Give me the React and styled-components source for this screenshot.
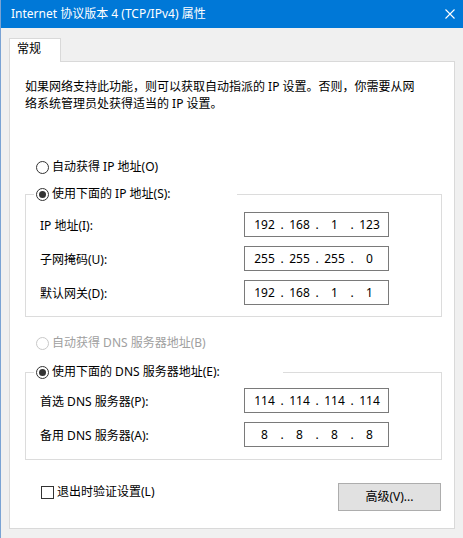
import React from "react";
import styled, { createGlobalStyle } from "styled-components";

const Global = createGlobalStyle`
  html, body { margin: 0; padding: 0; background: #f0f0f0; }
  * { box-sizing: border-box; }
`;

const Window = styled.div`
  width: 463px;
  height: 538px;
  overflow: hidden;
  background: #f0f0f0;
  border-left: 1px solid #7aa3d4;
  font-family: "Noto Sans", "Noto Sans CJK SC", sans-serif;
  font-size: 12px;
  color: #000;
`;

const TitleBar = styled.div`
  height: 28px;
  background: #0078d7;
  color: #fff;
  display: flex;
  align-items: center;
  justify-content: space-between;
  padding: 0 8px 1px 10px;
  line-height: 16px;
`;

const Content = styled.div`
  padding: 10px 8px 0 8px;
`;

const TabStrip = styled.div`
  display: flex;
`;

const Tab = styled.div`
  position: relative;
  z-index: 1;
  width: 52px;
  height: 24px;
  background: #fff;
  border: 1px solid #d9d9d9;
  border-bottom: none;
  padding: 1px 0 0 7px;
  line-height: 18px;
  margin-bottom: -1px;
`;

const Panel = styled.div`
  height: 468px;
  background: #fff;
  border: 1px solid #d9d9d9;
  padding: 0 12px 0 15px;
  display: flex;
  flex-direction: column;
`;

const Desc = styled.p`
  margin: 16px 0 0 0;
  line-height: 17px;
`;

const RadioRow = styled.label`
  display: flex;
  align-items: center;
  gap: 3px;
  height: 16px;
  line-height: 16px;
  margin-top: ${(p) => p.$mt || 0}px;
  padding-left: ${(p) => (p.$inLegend ? 2 : 11)}px;
  color: ${(p) => (p.$disabled ? "#a0a0a0" : "#000")};
`;

const RadioCircle = styled.span`
  width: 13px;
  height: 13px;
  border-radius: 50%;
  border: 1px solid ${(p) => (p.$disabled ? "#c8c8c8" : "#333")};
  background: #fff;
  display: flex;
  align-items: center;
  justify-content: center;
  flex: none;
  &::after {
    content: "";
    width: 7px;
    height: 7px;
    border-radius: 50%;
    background: #333;
    display: ${(p) => (p.$checked ? "block" : "none")};
  }
`;

const Group = styled.fieldset`
  margin: ${(p) => p.$mt}px 0 0 0;
  padding: 0;
  border: 1px solid #dcdcdc;
  min-width: 0;
`;

const Legend = styled.legend`
  margin-left: 8px;
  padding: 0;
  width: ${(p) => p.$w}px;
  height: 16px;
`;

const Rows = styled.div`
  display: flex;
  flex-direction: column;
  gap: 9px;
  padding: ${(p) => p.$pt}px 52px ${(p) => p.$pb}px 14px;
`;

const Row = styled.div`
  display: flex;
  align-items: center;
  justify-content: space-between;
`;

const IpBox = styled.div`
  width: 145px;
  height: 25px;
  border: 1px solid #7a7a7a;
  background: #fff;
  display: grid;
  grid-template-columns: 29px 6px 29px 6px 29px 6px 29px;
  align-items: center;
  padding-left: 5px;
  text-align: center;
  line-height: 16px;
`;

const BottomRow = styled.div`
  margin-top: 23px;
  display: flex;
  justify-content: space-between;
  align-items: flex-start;
  padding: 0 1px 0 16px;
`;

const CheckLabel = styled.label`
  margin-top: 1px;
  display: flex;
  align-items: center;
  gap: 3px;
  line-height: 16px;
`;

const CheckBox = styled.span`
  width: 13px;
  height: 13px;
  border: 1px solid #333;
  background: #fff;
  flex: none;
`;

const Button = styled.button`
  width: 103px;
  height: 28px;
  background: #e1e1e1;
  border: 1px solid #adadad;
  font-family: inherit;
  font-size: 12px;
  color: #000;
  padding: 0;
  line-height: 16px;
`;

function Ip({ parts }) {
  const cells = [];
  parts.forEach((p, i) => {
    if (i > 0) cells.push(<span key={"d" + i}>.</span>);
    cells.push(<span key={"p" + i}>{p}</span>);
  });
  return <IpBox>{cells}</IpBox>;
}

function Radio({ checked, disabled, children, ...rest }) {
  return (
    <RadioRow $disabled={disabled} {...rest}>
      <RadioCircle $checked={checked} $disabled={disabled} />
      <span>{children}</span>
    </RadioRow>
  );
}

export default function App() {
  return (
    <>
      <Global />
      <Window>
        <TitleBar>
          <span>Internet 协议版本 4 (TCP/IPv4) 属性</span>
          <svg width="10" height="10" viewBox="0 0 10 10">
            <path d="M0.5 0.5L9.5 9.5M9.5 0.5L0.5 9.5" stroke="#fff" strokeWidth="1.1" />
          </svg>
        </TitleBar>
        <Content>
          <TabStrip>
            <Tab>常规</Tab>
          </TabStrip>
          <Panel>
            <Desc>
              如果网络支持此功能，则可以获取自动指派的 IP 设置。否则，你需要从网
              <br />
              络系统管理员处获得适当的 IP 设置。
            </Desc>
            <Radio $mt={47}>自动获得 IP 地址(O)</Radio>
            <Group $mt={11}>
              <Legend $w={203}>
                <Radio checked $inLegend>
                  使用下面的 IP 地址(S):
                </Radio>
              </Legend>
              <Rows $pt={10} $pb={11}>
                <Row>
                  <span>IP 地址(I):</span>
                  <Ip parts={["192", "168", "1", "123"]} />
                </Row>
                <Row>
                  <span>子网掩码(U):</span>
                  <Ip parts={["255", "255", "255", "0"]} />
                </Row>
                <Row>
                  <span>默认网关(D):</span>
                  <Ip parts={["192", "168", "1", "1"]} />
                </Row>
              </Rows>
            </Group>
            <Radio disabled $mt={18}>
              自动获得 DNS 服务器地址(B)
            </Radio>
            <Group $mt={13}>
              <Legend $w={249}>
                <Radio checked $inLegend>
                  使用下面的 DNS 服务器地址(E):
                </Radio>
              </Legend>
              <Rows $pt={8} $pb={12}>
                <Row>
                  <span>首选 DNS 服务器(P):</span>
                  <Ip parts={["114", "114", "114", "114"]} />
                </Row>
                <Row>
                  <span>备用 DNS 服务器(A):</span>
                  <Ip parts={["8", "8", "8", "8"]} />
                </Row>
              </Rows>
            </Group>
            <BottomRow>
              <CheckLabel>
                <CheckBox />
                <span>退出时验证设置(L)</span>
              </CheckLabel>
              <Button>高级(V)...</Button>
            </BottomRow>
          </Panel>
        </Content>
      </Window>
    </>
  );
}
